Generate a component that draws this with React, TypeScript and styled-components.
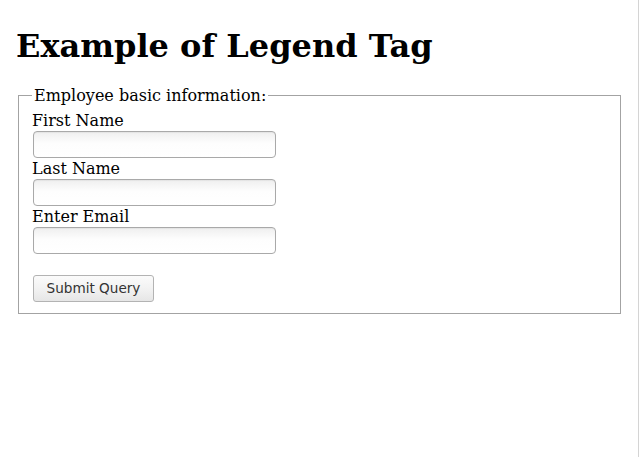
import React from "react";
import styled, { createGlobalStyle } from "styled-components";

const GlobalStyle = createGlobalStyle`
  html, body {
    margin: 0;
    padding: 0;
    background: #ffffff;
  }
  body {
    font-family: "DejaVu Serif", serif;
    font-size: 16px;
    color: #000;
  }
`;

const Page = styled.div`
  box-sizing: border-box;
  min-height: 100vh;
  padding: 6px 15px 0 16px;
  border-right: 1px solid #d4d4d4;
  display: flow-root;
`;

const Title = styled.h1`
  font-family: "DejaVu Serif", serif;
  font-weight: bold;
  font-size: 32px;
  line-height: 37px;
  margin: 21.5px 0 21.5px;
`;

const Fieldset = styled.fieldset`
  margin: 0 2px;
  padding: 5.6px 12px 11px 13px;
  border: 1px solid #a3a3a3;
  display: flex;
  flex-direction: column;
  align-items: flex-start;
`;

const Legend = styled.legend`
  padding: 0 2px;
  font-size: 16px;
  line-height: 19px;
`;

const Label = styled.label`
  display: block;
  font-size: 16px;
  line-height: 19px;
  height: 19px;
`;

const Input = styled.input`
  box-sizing: border-box;
  width: 243px;
  height: 27px;
  margin: 1px 0 1px 1px;
  border: 1px solid #a9a9a9;
  border-radius: 4px;
  background: linear-gradient(#efefef, #fdfdfd 45%, #ffffff);
  box-shadow: inset 0 1px 1px rgba(0, 0, 0, 0.05);
  font-family: "DejaVu Sans", sans-serif;
  font-size: 13px;
  padding: 0 4px;
  outline: none;
`;

const Spacer = styled.div`
  height: 20px;
`;

const Button = styled.button`
  box-sizing: border-box;
  width: 121px;
  height: 27px;
  margin: 0 0 0 1px;
  padding: 0 4px;
  border: 1px solid #b3b3b3;
  border-radius: 3px;
  background: linear-gradient(#fbfbfb, #f0f0f0 60%, #e6e6e6);
  font-family: "DejaVu Sans", sans-serif;
  font-size: 13.6px;
  color: #333333;
  cursor: pointer;
`;

export default function App() {
  return (
    <>
      <GlobalStyle />
      <Page>
        <Title>Example of Legend Tag</Title>
        <form onSubmit={(e) => e.preventDefault()}>
          <Fieldset>
            <Legend>Employee basic information:</Legend>
            <Label htmlFor="fname">First Name</Label>
            <Input id="fname" type="text" />
            <Label htmlFor="lname">Last Name</Label>
            <Input id="lname" type="text" />
            <Label htmlFor="email">Enter Email</Label>
            <Input id="email" type="email" />
            <Spacer />
            <Button type="submit">Submit Query</Button>
          </Fieldset>
        </form>
      </Page>
    </>
  );
}
